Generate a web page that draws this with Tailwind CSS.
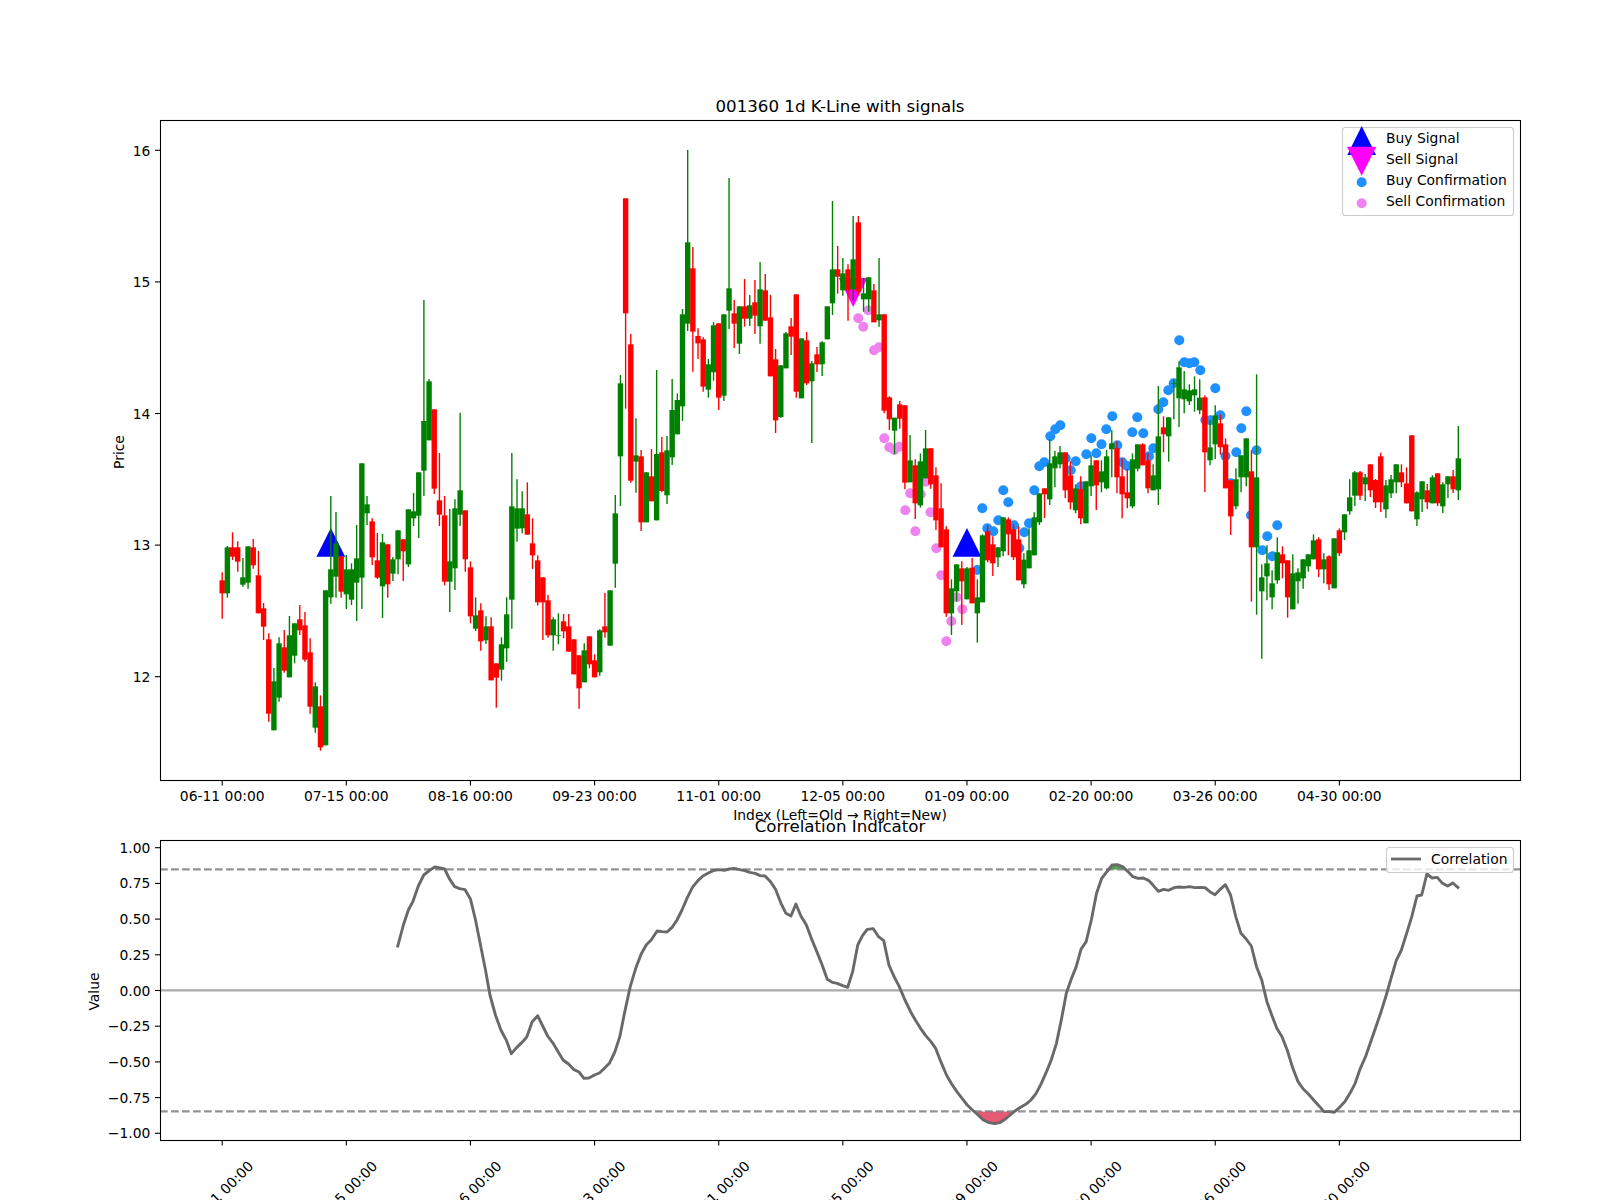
<!DOCTYPE html>
<html lang="en">
<head>
  <meta charset="UTF-8">
  <title>001360 1d K-Line with signals</title>
  <script src="https://cdn.jsdelivr.net/npm/@tailwindcss/browser@4"></script>
</head>
<body class="bg-white overflow-hidden">

  <svg id="chart" class="block font-['DejaVu_Sans',sans-serif] text-[13.89px] fill-black" width="1600" height="1200" viewBox="0 0 1600 1200">
    <!-- Chart content goes in these layers -->
    <g id="priceLayer"></g>
    <g id="corrLayer"></g>

    <!-- Axes frames -->
    <rect x="160.5" y="120.5" width="1360" height="660" fill="none" stroke="#000" stroke-width="1.1"></rect>
    <rect x="160.5" y="840.5" width="1360" height="300" fill="none" stroke="#000" stroke-width="1.1"></rect>
    <g id="ticks"></g>

    <!-- Titles and axis labels -->
    <text x="840" y="112" text-anchor="middle" class="text-[16.67px]">001360 1d K-Line with signals</text>
    <text x="124" y="452" text-anchor="middle" transform="rotate(-90 124 452)">Price</text>
    <text x="840" y="820" text-anchor="middle">Index (Left=Old → Right=New)</text>
    <text x="840" y="832" text-anchor="middle" class="text-[16.67px]">Correlation Indicator</text>
    <text x="99" y="991.5" text-anchor="middle" transform="rotate(-90 99 991.5)">Value</text>

    <!-- Price legend -->
    <rect x="1342.5" y="127.5" width="171" height="88" rx="3" fill="#fff" fill-opacity="0.8" stroke="#ccc" stroke-width="1.1"></rect>
    <polygon points="1361.7,126 1376,155 1347.3,155" fill="#0000ff"></polygon>
    <polygon points="1347,146.7 1376.3,146.7 1361.7,175.7" fill="#ff00ff"></polygon>
    <circle cx="1361.7" cy="182.3" r="5" fill="#1e90ff"></circle>
    <circle cx="1361.7" cy="203.3" r="5" fill="#ee82ee"></circle>
    <text x="1386" y="143">Buy Signal</text>
    <text x="1386" y="164">Sell Signal</text>
    <text x="1386" y="185">Buy Confirmation</text>
    <text x="1386" y="206">Sell Confirmation</text>

    <!-- Correlation legend -->
    <rect x="1386.5" y="847.5" width="127" height="25" rx="3" fill="#fff" fill-opacity="0.8" stroke="#ccc" stroke-width="1.1"></rect>
    <line x1="1391" y1="859" x2="1421" y2="859" stroke="#696969" stroke-width="2.78"></line>
    <text x="1431" y="864">Correlation</text>
  </svg>

  <script>
    const NS = 'http://www.w3.org/2000/svg';

    function add(parent, tag, attrs, text) {
      const el = document.createElementNS(NS, tag);
      for (const k in attrs) el.setAttribute(k, attrs[k]);
      if (text) el.textContent = text;
      parent.appendChild(el);
      return el;
    }

    // x pixel of a bar index
    const barX = i => 222.2 + 5.172 * i;
    const priceY = p => 150.3 + (16 - p) * 131.6;
    const valueY = v => 990.5 - 142.8 * v;

    // Candles read off the picture: colour, body top, body bottom, high, low.
    // Each block has its own y origin, values are 3x pixels from that origin.
    const candleBlocks = [
      [430, `r 451 490 427 566,g 352 490 348 503,r 352 380 307 390,r 352 395 334 425,g 442 464 384 470,g 349 458 349 476,
        r 352 406 327 416,r 436 550 363 550,r 535 590 519 630,r 628 851 610 875,g 754 901 714 901,g 640 803 622 815,
        r 652 722 600 728,g 616 742 558 742,g 580 677 580 700,r 568 601 525 615,r 586 689 546 695,r 667 830 625 851,
        g 769 893 757 908,r 829 952 796 962,g 481 946 481 946,g 418 502 198 521,g 340 440 246 503,r 379 485 379 503,
        g 418 493 375 537,g 418 509 400 525,g 385 458 285 573,g 100 443 100 537,g 223 250 198 285,r 274 382 265 405,
        r 391 443 309 447,g 337 469 312 564,r 343 463 343 503,g 388 431 381 453,g 301 388 301 433,r 328 364 328 453,
        g 238 403 238 411,g 244 265 189 288,g 127 257 127 324,g -27 122 -390 198,g -146 31 -153 31,r -62 176 -62 192,
        r 211 254 69 288,r 256 455 198 466,g 394 455 237 546,g 235 415 208 480,g 181 254 -52 288,r 241 388 241 425,
        r 412 559 394 580,g 556 596 502 603,r 541 634 520 662,g 589 631 559 642,r 589 751 562 751,r 700 743 700 833,
        g 643 719 622 752,g 553 655 502 696,g 229 509 69 596,g 235 296 148 335,g 235 295 184 310,r 253 314 157 314,
        r 340 376 265 417,r 391 517 376 527,r 442 517 442 630,r 511 616 495 623,g 568 616 562 662,g 615 617 550 643,
        r 574 604 552 625,r 589 665 552 665,r 628 733 628 733,r 676 775 676 836,g 661 757 640 757,r 619 703 619 715,
        r 691 742 673 742,g 601 727 598 737,r 589 607 489 623,g 481 647 481 647,g 250 401 195 473`],
      [130, `g 760 979 735 1128,r 205 550 205 836,r 643 1052 612 1058,g 976 995 865 1088`],
      [430, `r 79 277 60 303,g 127 277 127 277,r 139 214 57 214,g 72 271 -180 271,r 67 183 21 187,g 61 196 18 222,
        g -60 82 -153 105,g -90 13 -110 13`],
      [130, `g 553 829 537 873,g 337 581 60 603,r 415 605 351 725,r 618 640 595 687,r 628 770 622 785,g 703 779 687 803,
        g 586 727 576 752,r 580 803 580 840,g 553 797 553 813,g 475 542 144 597,r 550 581 510 654,g 529 641 529 672,
        r 529 566 447 590,g 526 566 495 588,r 517 557 450 612,g 478 589 396 641,r 481 572 432 572,r 562 739 495 739,
        r 688 871 657 909,g 706 861 706 863,g 610 715 606 715,r 589 620 564 675,r 493 785 493 803,g 625 805 625 805,
        r 631 760 606 765,g 700 754 693 939,r 673 703 651 726,g 637 703 634 738,g 529 628 529 628,g 418 520 213 555,
        r 418 440 348 491,g 430 481 384 497,r 418 481 403 572,g 388 478 258 510,r 277 484 258 495,g 490 508 445 545,
        g 442 508 442 545,r 481 577 462 577,g 553 571 384 590,r 553 842 553 850,r 802 868 799 900,g 863 902 863 972,
        r 823 866 813 896,r 826 1058 826 1078`],
      [440, `g 61 127 -15 127,r 76 190 58 237,g 64 196 40 203,g 25 115 -30 115,r 25 133 25 146,r 106 241 82 270,
        r 205 322 130 322,r 268 520 259 530,g 445 520 418 585,g 373 454 373 484,r 385 424 364 555,g 385 478 381 478,
        r 383 490 354 490,g 472 520 418 608,g 286 487 283 487,r 274 361 256 367,r 313 370 289 408,g 322 352 322 381,
        g 232 334 232 349,r 238 283 232 346,r 268 352 253 360,r 298 421 259 421,g 359 433 340 445,g 331 385 265 385,
        g 232 346 217 346,g 160 247 160 255,r 145 163 145 234`],
      [400, `g 190 298 118 315,g 169 205 153 262,g 157 193 138 205,r 157 271 157 295,r 226 307 184 328,g 265 331 253 340,
        r 268 355 229 373,g 244 370 244 370,g 196 259 166 288,r 181 256 181 330,g 214 247 181 277,g 169 265 150 268,
        g 130 148 91 232,r 145 232 124 280,r 229 283 175 355,r 277 295 208 325,g 178 319 160 325,g 133 206 133 214,
        r 133 196 130 196,r 181 265 160 280,g 226 271 193 271,g 109 268 -42 315`],
      [320, `r 322 343 289 397,g 292 349 292 425,g 189 191 178 298,g 142 235 124 321,g 208 238 153 280,g 211 244 193 255,
        g 208 226 169 275,g 233 271 178 283,r 232 397 226 516,g 382 421 301 436,g 286 373 256 417,r 310 382 283 404,
        r 373 505 355 505,r 481 589 481 645,g 478 559 445 568,g 406 472 406 517,g 355 472 355 499,r 454 682 391 845,
        g 472 682 163 884,g 772 814 733 1016,g 730 769 676 841,g 790 832 751 868,g 697 781 652 791,r 703 730 679 775,
        r 721 832 721 893,g 760 868 703 868,g 757 784 745 851,g 718 775 718 806,g 703 739 703 755,g 661 718 643 718,
        r 658 748 652 771,g 718 748 700 790,r 709 793 706 810,g 655 805 655 805,r 631 700 625 708,g 583 637 583 660,
        g 532 574 478 584`],
      [400, `g 217 287 213 318,r 217 287 213 300,g 232 253 222 303,r 193 271 193 291,r 240 307 237 324,r 169 307 158 336,
        g 256 328 240 354,g 238 280 225 294,g 193 247 193 280,r 217 247 193 261,r 250 310 202 310,r 106 334 106 334,
        g 277 358 274 378,g 244 298 244 336,r 271 307 252 327,g 232 310 226 310,r 220 310 220 318,g 253 319 247 339,
        g 229 253 229 294,r 229 268 210 279,g 175 271 78 300`]
    ];

    const buyDots = [[977.3,570],[982.3,508.3],[987.3,528.3],[993.3,531.3],[998.3,520.3],[1003.3,490.3],[1008.3,502.3],
      [1014,525.3],[1019.3,548.3],[1024.3,532.3],[1029,523.3],[1034.3,490.3],[1039.3,466.3],[1044.3,462.3],[1050.3,436.3],
      [1055.3,429.3],[1060.3,425.3],[1065.7,458.3],[1070.7,470.3],[1075.7,461.3],[1081,486.3],[1086.3,454.3],[1091.3,438.3],
      [1096.3,453.3],[1101.5,444.3],[1106.3,429.3],[1112.3,416.3],[1117.3,445.3],[1122.3,462.3],[1127,466],[1132.3,432.3],
      [1137.3,417.3],[1143.3,433.3],[1149,456.3],[1153.3,448.3],[1158.3,409.3],[1163.3,402.3],[1168.3,390.3],[1173.7,383.3],
      [1179.3,340.3],[1184.3,362.3],[1189.3,363.3],[1194.3,362.3],[1200.3,370.3],[1205.3,420],[1210.3,420.3],[1215.3,388.3],
      [1220.3,415.3],[1225.5,456],[1230.7,483.3],[1236.3,452.3],[1241.3,428.3],[1246.3,411.3],[1251,515.3],[1256.5,450.3],
      [1262.3,550.3],[1267.3,536.3],[1272.3,556.3],[1277.3,525.3]];

    const sellDots = [[858.3,318.3],[863.3,326.7],[868.3,310.3],[874,350.3],[879,347.3],[884.3,438.3],[889.3,447.3],
      [894.3,450],[899.3,446.7],[910.2,493.3],[920.7,494.3],[905.3,510.3],[930.5,512.3],[915.3,531.3],[925.7,481.7],
      [936.3,548.3],[941.3,575.3],[956.7,597.3],[962.3,609.3],[951.3,621.3],[946.3,641.3]];

    // Correlation curve, x and y are zoom pixels of the two crops I read it from
    const corrLeft = [638,532,650,465,660,420,669,395,680,348,691,315,702,302,713,291,724,294,733,297,742,325,753,350,763,356,
      774,359,785,388,795,450,805,525,815,600,824,675,835,735,846,780,857,811,867,851,878,832,888,818,898,801,909,755,920,737,
      930,768,940,798,951,820,961,845,971,870,982,882,992,898,1003,906,1013,925,1023,924,1034,915,1044,909,1054,895,1064,880,
      1075,846,1085,800,1095,725,1106,650,1117,595,1128,552,1138,525,1148,510,1160,483,1170,485,1180,486,1190,472,1200,450,
      1210,420,1220,385,1231,352,1242,332,1252,318,1263,309,1273,302,1284,299,1295,301,1305,297,1315,295,1326,299,1336,302,
      1346,307,1357,310,1367,317,1377,318,1388,335,1398,358,1409,400,1419,430,1429,438,1439,402,1449,438,1460,465,1470,505,
      1481,545,1491,582,1502,628,1512,637,1522,640,1533,647,1543,652,1553,605];
    const corrRight = [80,525,90,497,100,478,113,476,124,500,135,512,146,585,157,620,168,650,180,690,192,725,202,750,213,775,
      224,797,235,815,245,835,256,875,268,915,279,942,290,965,301,985,312,1005,323,1020,335,1035,346,1050,358,1058,370,1061,
      381,1058,392,1048,403,1035,414,1022,425,1012,436,1003,447,990,458,970,469,940,480,905,490,870,501,820,512,745,522,670,
      533,625,543,590,553,538,564,515,575,450,586,370,597,325,608,305,619,285,630,284,641,290,652,304,663,320,674,325,685,324,
      696,331,706,346,717,364,728,358,739,361,750,353,761,351,772,352,783,350,794,353,805,352,816,353,826,365,837,374,848,358,
      859,344,870,375,881,440,892,490,903,507,914,528,925,590,936,630,947,695,958,738,968,775,979,800,990,840,1002,895,1013,935,
      1024,957,1035,972,1046,990,1057,1007,1068,1025,1079,1025,1090,1027,1100,1013,1112,995,1123,970,1134,940,1145,895,1156,860,
      1167,815,1178,770,1189,725,1200,675,1210,625,1221,572,1232,540,1243,490,1254,440,1265,378,1275,375,1286,312,1297,324,
      1308,322,1319,340,1330,348,1341,339,1354,355];

    const dateLabels = ['06-11 00:00','07-15 00:00','08-16 00:00','09-23 00:00','11-01 00:00',
      '12-05 00:00','01-09 00:00','02-20 00:00','03-26 00:00','04-30 00:00'];

    function drawPrice() {
      const g = document.getElementById('priceLayer');

      // Signals sit under the candles
      [21, 144].forEach(i => {
        const x = barX(i);
        add(g, 'polygon', { points: `${x},528 ${x + 14.4},556.7 ${x - 14.4},556.7`, fill: '#0000ff' });
      });
      const sx = barX(122);
      add(g, 'polygon', { points: `${sx - 14.4},278 ${sx + 14.4},278 ${sx},307`, fill: '#ff00ff' });

      sellDots.forEach(([x, y]) => add(g, 'circle', { cx: x, cy: y, r: 5, fill: '#ee82ee' }));
      buyDots.forEach(([x, y]) => add(g, 'circle', { cx: x, cy: y, r: 5, fill: '#1e90ff' }));

      let i = 0;
      candleBlocks.forEach(([y0, rows]) => {
        rows.split(',').forEach(row => {
          const [c, top, bot, hi, lo] = row.trim().split(' ');
          const col = c === 'r' ? '#ff0000' : '#008000';
          const y = v => y0 + Number(v) / 3;
          const x = barX(i);
          add(g, 'line', { x1: x, x2: x, y1: y(hi), y2: y(lo), stroke: col, 'stroke-width': 1.39 });
          add(g, 'rect', { x: x - 2.7, y: y(top), width: 5.4, height: y(bot) - y(top), fill: col });
          i++;
        });
      });
    }

    function drawCorrelation() {
      const g = document.getElementById('corrLayer');
      const pts = [];
      for (let k = 0; k < corrLeft.length; k += 2) pts.push([80 + corrLeft[k] / 2.01, 770 + corrLeft[k + 1] / 3]);
      for (let k = 0; k < corrRight.length; k += 2) pts.push([820 + corrRight[k] / 2.119, 770 + corrRight[k + 1] / 3]);

      const top = 869.4, bottom = 1111.4;
      const pointStr = list => list.map(p => p.join(',')).join(' ');

      // Shaded parts where the curve passes the two limits
      const low = pts.filter(p => p[1] >= bottom && p[0] > 900 && p[0] < 1020);
      add(g, 'polygon', { points: pointStr([[976.5, bottom], ...low, [1013.5, bottom]]), fill: '#dc143c', 'fill-opacity': 0.7 });
      const high = pts.filter(p => p[1] <= top && p[0] > 1100 && p[0] < 1130);
      add(g, 'polygon', { points: pointStr([[1108.5, top], ...high, [1123, top]]), fill: '#008000', 'fill-opacity': 0.7 });

      [top, bottom].forEach(y => add(g, 'line', { x1: 160, x2: 1520, y1: y, y2: y, stroke: '#808080', 'stroke-opacity': 0.85, 'stroke-width': 2.08, 'stroke-dasharray': '7.7 3.3' }));
      add(g, 'line', { x1: 160, x2: 1520, y1: 990.4, y2: 990.4, stroke: '#aaaaaa', 'stroke-width': 2.08 });
      add(g, 'polyline', { points: pointStr(pts), fill: 'none', stroke: '#696969', 'stroke-width': 2.9, 'stroke-linejoin': 'round' });
    }

    function drawTicks() {
      const g = document.getElementById('ticks');

      dateLabels.forEach((label, n) => {
        const x = barX(n * 24);
        add(g, 'line', { x1: x, x2: x, y1: 780.5, y2: 785.5, stroke: '#000', 'stroke-width': 1.1 });
        add(g, 'line', { x1: x, x2: x, y1: 1140.5, y2: 1145.5, stroke: '#000', 'stroke-width': 1.1 });
        add(g, 'text', { x: x, y: 801, 'text-anchor': 'middle' }, label);
        // Lower labels run off the bottom of the figure
        const ex = x + 32, ey = 1167;
        add(g, 'text', { x: ex, y: ey, 'text-anchor': 'end', transform: `rotate(-45 ${ex} ${ey})` }, label);
      });

      [12, 13, 14, 15, 16].forEach(p => {
        const y = priceY(p);
        add(g, 'line', { x1: 155, x2: 160, y1: y, y2: y, stroke: '#000', 'stroke-width': 1.1 });
        add(g, 'text', { x: 150.3, y: y + 5.2, 'text-anchor': 'end' }, String(p));
      });

      [1, 0.75, 0.5, 0.25, 0, -0.25, -0.5, -0.75, -1].forEach(v => {
        const y = valueY(v);
        add(g, 'line', { x1: 155, x2: 160, y1: y, y2: y, stroke: '#000', 'stroke-width': 1.1 });
        add(g, 'text', { x: 150.3, y: y + 5, 'text-anchor': 'end' }, v.toFixed(2).replace('-', '\u2212'));
      });
    }

    drawPrice();
    drawCorrelation();
    drawTicks();
  </script>

</body>
</html>
